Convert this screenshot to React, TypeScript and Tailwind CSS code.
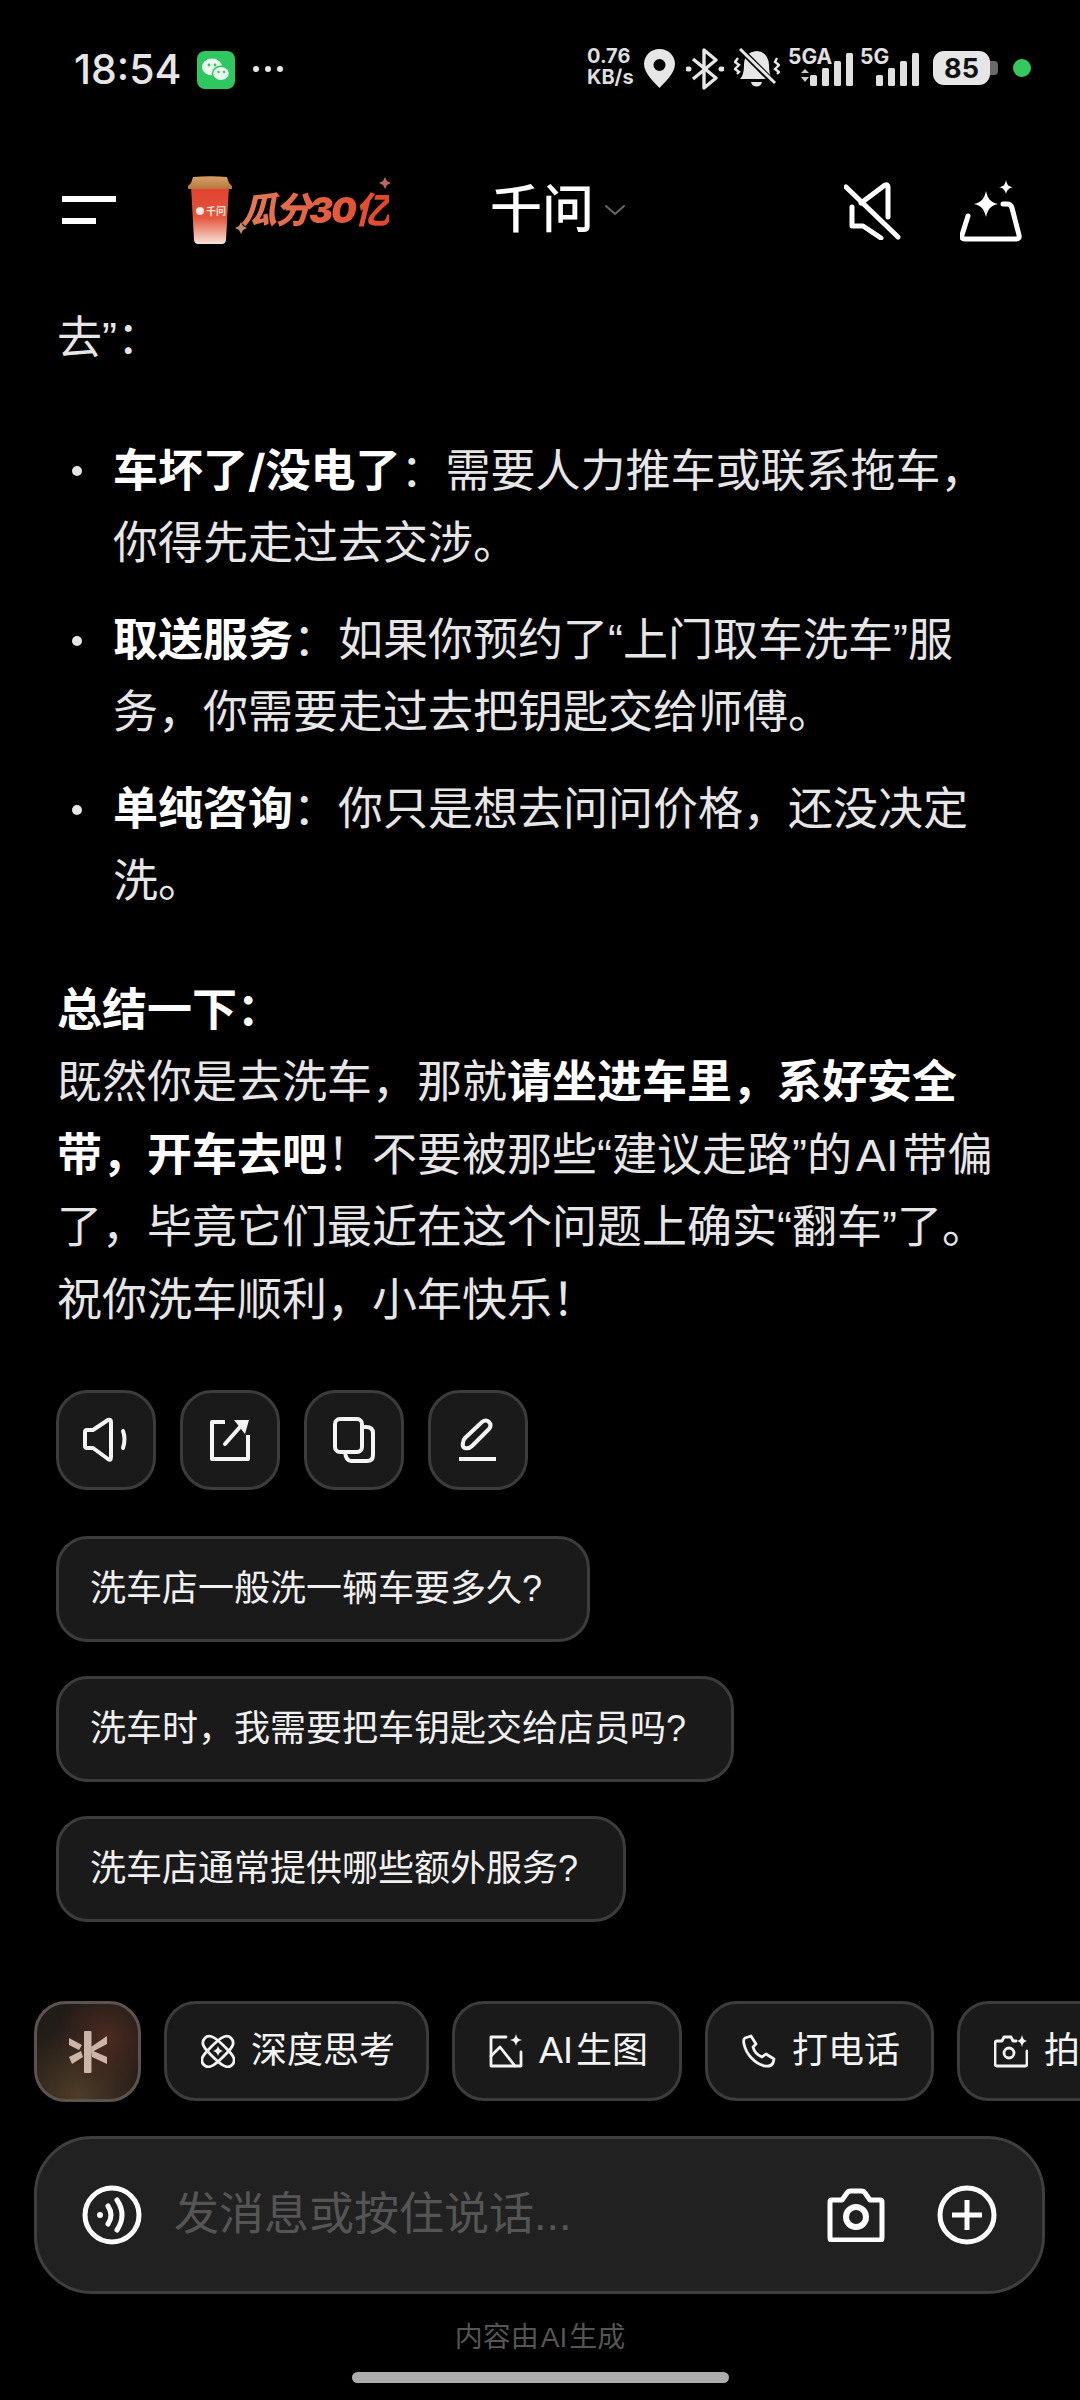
import React from "react";

const B = ({ children }: { children: React.ReactNode }) => (
  <b className="font-bold text-white">{children}</b>
);

function Bullet({ lines }: { lines: React.ReactNode }) {
  return (
    <div className="flex">
      <div className="w-[56px] h-[72px] shrink-0 flex items-center pl-[15px]">
        <div className="w-[10px] h-[10px] rounded-full bg-[#e6e6e6]" />
      </div>
      <div>{lines}</div>
    </div>
  );
}

function ActionBtn({ children }: { children: React.ReactNode }) {
  return (
    <div className="w-[100px] h-[100px] rounded-[32px] bg-[#1a1a1a] border-[3px] border-[#3c3c3c] flex items-center justify-center">
      {children}
    </div>
  );
}

function Suggestion({ text }: { text: string }) {
  return (
    <div className="self-start h-[106px] pl-[31px] pr-[45px] flex items-center rounded-[32px] bg-[#1a1a1a] border-[3px] border-[#3c3c3c] text-[36px] text-[#f0f0f0] whitespace-nowrap">
      {text}
    </div>
  );
}

function Tool({ icon, label }: { icon: React.ReactNode; label: React.ReactNode }) {
  return (
    <div className="shrink-0 h-[100px] pl-[34px] pr-[31px] flex items-center gap-[16px] rounded-[32px] bg-[#1a1a1a] border-[3px] border-[#3c3c3c] text-[36px] text-[#f4f4f4] whitespace-nowrap">
      {icon}
      <span>{label}</span>
    </div>
  );
}

const stroke = {
  fill: "none",
  stroke: "currentColor",
  strokeLinecap: "round" as const,
  strokeLinejoin: "round" as const,
};

export default function App() {
  return (
    <div className="w-[1080px] h-[2400px] bg-black text-[#e8e8e8] overflow-hidden flex flex-col font-['Liberation_Sans','Noto_Sans_CJK_SC',sans-serif]">
      {/* status bar */}
      <div className="h-[120px] shrink-0 pt-[48px] pl-[74px] pr-[49px] flex items-start font-['Inter','Noto_Sans_CJK_SC',sans-serif]">
        <div className="h-[42px] flex items-center text-[41px] font-medium text-[#e6e6e6] leading-none">18:54</div>
        <svg className="ml-[15px] mt-[3px] w-[38px] h-[38px]" viewBox="0 0 38 38">
          <rect width="38" height="38" rx="8" fill="#2fc75f" />
          <ellipse cx="15" cy="16" rx="10" ry="8.5" fill="#e9f9ee" />
          <ellipse cx="24" cy="22.5" rx="8.5" ry="7.2" fill="#e9f9ee" stroke="#2fc75f" strokeWidth="1.4" />
          <circle cx="12" cy="14" r="1.4" fill="#2fc75f" />
          <circle cx="18" cy="14" r="1.4" fill="#2fc75f" />
          <circle cx="21.5" cy="21" r="1.2" fill="#2fc75f" />
          <circle cx="27" cy="21" r="1.2" fill="#2fc75f" />
        </svg>
        <svg className="ml-[17px] mt-[17px] w-[32px] h-[8px]" viewBox="0 0 32 8" fill="#e6e6e6">
          <circle cx="4" cy="4" r="3" />
          <circle cx="16" cy="4" r="3" />
          <circle cx="28" cy="4" r="3" />
        </svg>
        <div className="ml-auto flex items-start">
          <div className="w-[48px] text-[20px] font-bold leading-[21px] text-[#dedede] mt-[-2px]">
            <div>0.76</div>
            <div>KB/s</div>
          </div>
          <svg className="ml-[8px] w-[33px] h-[41px]" viewBox="0 0 33 41">
            <path fillRule="evenodd" fill="#e6e6e6" d="M16.5 1C7.500 1 1 7.800 1 16c0 9.500 10.500 18.500 15.500 24C21.500 34.500 32 25.500 32 16 32 7.800 25.500 1 16.500 1Zm0 10a6 6 0 1 1 0 12 6 6 0 0 1 0-12Z" />
          </svg>
          <svg className="ml-[10px] w-[38px] h-[42px] text-[#e6e6e6]" viewBox="0 0 38 42" {...stroke} strokeWidth="3.4">
            <path d="M7 11 30 30 18 40V2l12 10L7 31" strokeLinecap="butt" />
            <path d="M2 21h1M35 21h1" strokeWidth="5" />
          </svg>
          <svg className="ml-[10px] w-[46px] h-[42px] text-[#e6e6e6]" viewBox="0 0 46 42">
            <path fill="currentColor" d="M6 31q4-4 4-14Q10 4 23 3q11 1 12 14 0 9 3 14Z" />
            <path fill="currentColor" d="M17 34h11c-1 6-10 6-11 0Z" />
            <path d="M5 0 43 38" stroke="#000" strokeWidth="6" />
            <path d="M6 1 41 35" stroke="currentColor" strokeWidth="3" />
            <path d="M4 10 1 14l4 3-4 4 4 3-2 2" stroke="currentColor" strokeWidth="2.400" fill="none" />
            <path d="M43 10l-2 4 4 3-4 4 4 3-2 2" stroke="currentColor" strokeWidth="2.400" fill="none" />
          </svg>
          <svg className="ml-[8px] w-[132px] h-[42px]" viewBox="0 0 132 42" fill="#e0e0e0">
            <text x="0" y="16" fontSize="21" fontWeight="700">5GA</text>
            <path d="M13 25l4-4 4 4ZM13 29h8l-4 5Z" opacity="0.9" />
            <rect x="22" y="27" width="7" height="11" rx="1.500" />
            <rect x="34" y="20" width="7" height="18" rx="1.500" />
            <rect x="46" y="13" width="7" height="25" rx="1.500" />
            <rect x="58" y="5" width="7" height="33" rx="1.500" />
            <text x="72" y="16" fontSize="21" fontWeight="700">5G</text>
            <rect x="88" y="27" width="7" height="11" rx="1.500" />
            <rect x="100" y="20" width="7" height="18" rx="1.500" />
            <rect x="112" y="13" width="7" height="25" rx="1.500" />
            <rect x="124" y="5" width="7" height="33" rx="1.500" />
          </svg>
          <div className="ml-[13px] mt-[3px] w-[57px] h-[34px] rounded-[11px] bg-[#e6e6e6] flex items-center justify-center text-[27px] font-bold text-[#111] leading-none">85</div>
          <div className="mt-[13px] w-[8px] h-[14px] rounded-r-[4px] bg-[#6a6a6a]" />
          <div className="ml-[15px] mt-[11px] w-[18px] h-[18px] rounded-full bg-[#35c85e]" />
        </div>
      </div>

      {/* header */}
      <div className="h-[182px] shrink-0 pl-[62px] pr-[58px] flex items-center font-['Inter','Noto_Sans_CJK_SC',sans-serif]">
        <div className="w-[54px] flex flex-col gap-[16px] mt-[-2px]">
          <div className="w-[54px] h-[6px] bg-white" />
          <div className="w-[34px] h-[6px] bg-white" />
        </div>
        <svg className="ml-[72px] w-[44px] h-[68px] mt-[-2px]" viewBox="0 0 44 68">
          <defs>
            <linearGradient id="cup" x1="0" y1="0" x2="0" y2="1">
              <stop offset="0" stopColor="#e2402f" />
              <stop offset="0.55" stopColor="#e5573f" />
              <stop offset="1" stopColor="#f6e5da" />
            </linearGradient>
            <linearGradient id="lid" x1="0" y1="0" x2="0" y2="1">
              <stop offset="0" stopColor="#d9a066" />
              <stop offset="1" stopColor="#b5783c" />
            </linearGradient>
          </defs>
          <path d="M3 10h38l-3 54q-.500 4-4 4H10q-3.500 0-4-4Z" fill="url(#cup)" />
          <path d="M5 1q17-1.500 34 0l2 6 3 3v3H0v-3l3-3Z" fill="url(#lid)" />
          <circle cx="12" cy="35" r="4" fill="#fbe5dc" />
          <text x="18" y="39" fontSize="10" fontWeight="700" fill="#fbe5dc">千问</text>
        </svg>
        <div className="relative ml-[9px] w-[148px] mt-[-2px] leading-none">
          <div className="text-[36px] font-black italic tracking-[-2px] bg-linear-to-r from-[#e27a58] to-[#e24429] bg-clip-text text-transparent whitespace-nowrap">瓜分30亿</div>
          <svg className="absolute right-[-2px] top-[-15px] w-[12px] h-[12px]" viewBox="0 0 12 12" fill="#b8695a">
            <path d="M6 0l2 4 4 2-4 2-2 4-2-4-4-2 4-2Z" />
          </svg>
          <svg className="absolute left-[-6px] bottom-[-6px] w-[12px] h-[12px]" viewBox="0 0 12 12" fill="#c98a70">
            <path d="M6 0l2 4 4 2-4 2-2 4-2-4-4-2 4-2Z" />
          </svg>
        </div>
        <div className="ml-[101px] text-[52px] leading-none text-white whitespace-nowrap mt-[-2px] font-medium">千问</div>
        <svg className="ml-[10px] mt-[-2px] w-[22px] h-[14px] text-[#666]" viewBox="0 0 22 14" {...stroke} strokeWidth="2">
          <path d="M2 3l9 8 9-8" />
        </svg>
        <svg className="ml-auto w-[58px] h-[58px] text-white" viewBox="0 0 58 58" {...stroke} strokeWidth="5">
          <path d="M2 5 54 55" />
          <path d="M17 21 41 3q3-1 3 2v30" />
          <path d="M8 25v19h11l18 12" />
        </svg>
        <svg className="ml-[58px] w-[62px] h-[62px] text-white" viewBox="0 0 62 62" {...stroke} strokeWidth="5">
          <path d="M8 36 2 55q-1 4 3 4h51q4 0 3-4L52 28q-1-4-5-4h-4" />
          <path fill="#fff" stroke="none" d="M26 11c2 8 4 11 12 13-8 2-10 5-12 13-2-8-4-11-12-13 8-2 10-5 12-13Z" />
          <path fill="#fff" stroke="none" d="M46 0c1 5 3 7 7 7-4 1-6 3-7 7-1-4-3-6-7-7 4 0 6-2 7-7Z" />
        </svg>
      </div>

      {/* answer */}
      <div className="pt-[1px] pl-[57px] text-[45px] leading-[72.5px] text-[#e6e6e6] whitespace-nowrap">
        <div>去”：</div>
        <div className="mt-[59px] flex flex-col gap-[24px]">
          <Bullet lines={<><B>车坏了<span className="font-['Inter']">/</span>没电了</B>：需要人力推车或联系拖车，<br />你得先走过去交涉。</>} />
          <Bullet lines={<><B>取送服务</B>：如果你预约了“上门取车洗车”服<br />务，你需要走过去把钥匙交给师傅。</>} />
          <Bullet lines={<><B>单纯咨询</B>：你只是想去问问价格，还没决定<br />洗。</>} />
        </div>
        <div className="mt-[56px]">
          <B>总结一下：</B>
          <br />
          既然你是去洗车，那就<B>请坐进车里，系好安全</B>
          <br />
          <B>带，开车去吧</B>！不要被那些“建议走路”的<span className="mx-[4px]">AI</span>带偏
          <br />
          了，毕竟它们最近在这个问题上确实“翻车”了。
          <br />
          祝你洗车顺利，小年快乐！
        </div>
      </div>

      {/* actions */}
      <div className="mt-[53px] pl-[56px] flex gap-[24px] text-[#f5f5f5]">
        <ActionBtn>
          <svg className="w-[48px] h-[46px]" viewBox="0 0 48 46" {...stroke} strokeWidth="4">
            <path d="M3 15v14q0 2 2 2h6l15 11q3 2 3-2V5q0-3-3-2L11 13H5q-2 0-2 2Z" />
            <path d="M41 14q3 8 0 17" />
          </svg>
        </ActionBtn>
        <ActionBtn>
          <svg className="w-[42px] h-[44px]" viewBox="0 0 42 44" {...stroke} strokeWidth="4">
            <path d="M16 4H3v37h36V17" strokeLinecap="butt" />
            <path d="M16 26 31 9" />
            <path fill="currentColor" stroke="none" d="M25 2h15l-4 14Z" />
          </svg>
        </ActionBtn>
        <ActionBtn>
          <svg className="w-[42px] h-[46px]" viewBox="0 0 42 46" {...stroke} strokeWidth="4">
            <rect x="2" y="2" width="27" height="33" rx="5" />
            <path d="M29 10h4q7 0 7 6v22q0 6-6 6H18q-5 0-6-9" />
          </svg>
        </ActionBtn>
        <ActionBtn>
          <svg className="w-[40px] h-[44px]" viewBox="0 0 40 44" {...stroke} strokeWidth="4">
            <path d="M7 20 24 4q4-3 7 0t0 7L14 28q-3 3-7 2-3-1-2-5 0-3 2-5Z" />
            <path d="M1 41h37" strokeLinecap="butt" />
          </svg>
        </ActionBtn>
      </div>

      {/* suggestions */}
      <div className="mt-[46px] pl-[56px] flex flex-col gap-[34px]">
        <Suggestion text="洗车店一般洗一辆车要多久?" />
        <Suggestion text="洗车时，我需要把车钥匙交给店员吗?" />
        <Suggestion text="洗车店通常提供哪些额外服务?" />
      </div>

      {/* tools */}
      <div className="mt-[79px] pl-[34px] flex gap-[23px] overflow-hidden text-white">
        <div className="shrink-0 w-[107px] h-[101px] rounded-[32px] border-[3px] border-[#5c5350] flex items-center justify-center bg-[radial-gradient(circle_at_70%_35%,#4a2a20_0%,transparent_55%),radial-gradient(circle_at_40%_95%,#4e3c27_0%,#241d18_60%,#1c1a18_100%)]">
          <svg className="w-[38px] h-[42px]" viewBox="0 0 38 42" fill="#cdb4a8">
            <rect x="15" y="0" width="7.500" height="42" rx="1" />
            <path d="M0 7l13 7-3 5L0 14ZM0 26l12-6 2 6-11 7ZM38 5v8l-15 8-1-5ZM22 19l16 7v7l-15-7Z" />
          </svg>
        </div>
        <Tool
          label="深度思考"
          icon={
            <svg className="w-[34px] h-[34px]" viewBox="0 0 34 34" {...stroke} strokeWidth="2.800">
              <path d="M4 4c5-5 12 1 20 9s12 13 7 18-12-1-20-9S-1 9 4 4Z" />
              <path d="M30 4c-5-5-12 1-20 9S-2 26 3 31s12-1 20-9S35 9 30 4Z" />
              <path fill="currentColor" stroke="none" d="M17 12c1 3 2 4 5 5-3 1-4 2-5 5-1-3-2-4-5-5 3-1 4-2 5-5Z" />
            </svg>
          }
        />
        <Tool
          label={<><span className="mr-[3px]">AI</span>生图</>}
          icon={
            <svg className="w-[34px] h-[34px]" viewBox="0 0 34 34" {...stroke} strokeWidth="2.800">
              <path d="M17 3H2v29h30V18" />
              <path d="M2 22 11 13 26 32" />
              <path fill="currentColor" stroke="none" d="M27 0c1 4 2 5 6 6-4 1-5 2-6 6-1-4-2-5-6-6 4-1 5-2 6-6Z" />
            </svg>
          }
        />
        <Tool
          label="打电话"
          icon={
            <svg className="w-[34px] h-[34px]" viewBox="0 0 34 34" {...stroke} strokeWidth="2.800">
              <path d="M9 2 3 4q-2 1-1 6c2 10 11 20 21 22q6 1 8-3l1-4-8-5-4 3C15 21 12 17 11 13l3-3Z" />
            </svg>
          }
        />
        <Tool
          label="拍题答疑"
          icon={
            <svg className="w-[34px] h-[34px]" viewBox="0 0 34 34" {...stroke} strokeWidth="2.800">
              <path d="M22 7h-3l-2-4H10L8 7H3q-2 0-2 2v21q0 2 2 2h28q2 0 2-2V17" />
              <circle cx="15" cy="19" r="5" />
              <path fill="currentColor" stroke="none" d="M28 1c1 4 2 5 5 6-3 1-4 2-5 6-1-4-2-5-5-6 3-1 4-2 5-6Z" />
            </svg>
          }
        />
      </div>

      {/* input */}
      <div className="mt-[34px] ml-[34px] w-[1011px] h-[158px] shrink-0 rounded-[58px] bg-[#212121] border-[3px] border-[#3f3f3f] flex items-center pl-[45px] pr-[45px]">
        <svg className="w-[60px] h-[60px] text-white" viewBox="0 0 60 60" {...stroke} strokeWidth="5">
          <circle cx="30" cy="30" r="27" />
          <circle cx="18" cy="30" r="3" fill="#fff" stroke="none" />
          <path d="M26 21q6 9 0 18" />
          <path d="M35 15q10 15 0 30" />
        </svg>
        <div className="ml-[32px] text-[45px] text-[#555] whitespace-nowrap">发消息或按住说话...</div>
        <svg className="ml-auto w-[58px] h-[54px] text-white" viewBox="0 0 58 54" {...stroke} strokeWidth="5">
          <path d="M3 14q0-2 2-2h10l5-7q1-2 4-2h10q3 0 4 2l5 7h10q2 0 2 2v36q0 2-2 2H5q-2 0-2-2Z" />
          <circle cx="29" cy="29" r="10" strokeWidth="6" />
        </svg>
        <svg className="ml-[52px] w-[60px] h-[60px] text-white" viewBox="0 0 60 60" {...stroke} strokeWidth="5">
          <circle cx="30" cy="30" r="27" />
          <path d="M15 30h30M30 15v30" strokeLinecap="butt" />
        </svg>
      </div>

      {/* footer */}
      <div className="mt-[24px] text-center text-[28px] leading-[40px] text-[#555]">内容由<span className="mx-[2px]">AI</span>生成</div>
      <div className="mt-[14px] ml-[352px] w-[377px] h-[11px] rounded-full bg-[#adadad]" />
    </div>
  );
}
